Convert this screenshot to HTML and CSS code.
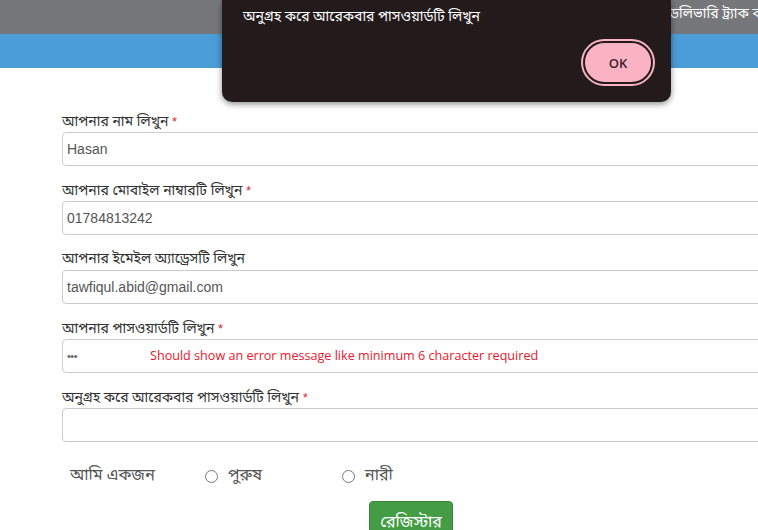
FILE: index.html
```html
<!DOCTYPE html>
<html lang="bn">
<head>
<meta charset="utf-8">
<title>Register</title>
<link rel="stylesheet" href="styles.css">
</head>
<body>
<header class="topbar">
  <span class="track">ডেলিভারি ট্র্যাক করুন</span>
</header>
<div class="navbar"></div>

<main class="form">
  <div class="group">
    <label class="label">আপনার নাম লিখুন <span class="req">*</span></label>
    <div class="input">Hasan</div>
  </div>
  <div class="group">
    <label class="label">আপনার মোবাইল নাম্বারটি লিখুন <span class="req">*</span></label>
    <div class="input">01784813242</div>
  </div>
  <div class="group">
    <label class="label">আপনার ইমেইল অ্যাড্রেসটি লিখুন</label>
    <div class="input">tawfiqul.abid@gmail.com</div>
  </div>
  <div class="group">
    <label class="label">আপনার পাসওয়ার্ডটি লিখুন <span class="req">*</span></label>
    <div class="input input-pass"><span class="dots">•••</span><span class="error">Should show an error message like minimum 6 character required</span></div>
  </div>
  <div class="group">
    <label class="label">অনুগ্রহ করে আরেকবার পাসওয়ার্ডটি লিখুন <span class="req">*</span></label>
    <div class="input"></div>
  </div>
  <div class="gender">
    <span class="gender-label">আমি একজন</span>
    <span class="radio-opt"><span class="radio"></span>পুরুষ</span>
    <span class="radio-opt"><span class="radio"></span>নারী</span>
  </div>
  <div class="actions">
    <button class="btn">রেজিস্টার</button>
  </div>
</main>

<div class="dialog">
  <p class="dialog-msg">অনুগ্রহ করে আরেকবার পাসওয়ার্ডটি লিখুন</p>
  <div class="dialog-actions">
    <button class="ok">OK</button>
  </div>
</div>
</body>
</html>
```

FILE: styles.css
```css
html, body {
  margin: 0;
  padding: 0;
  overflow: hidden;
  background: #ffffff;
}
body {
  font-family: "Noto Sans Bengali", "Noto Serif Bengali", "Lohit Bengali", "FreeSerif", "Liberation Sans", sans-serif;
  color: #333333;
  width: 758px;
  height: 530px;
  position: relative;
}
.topbar {
  height: 34px;
  background: #76777b;
  display: flex;
  align-items: center;
  padding-left: 664px;
  white-space: nowrap;
  overflow: hidden;
}
.track {
  color: #ffffff;
  font-size: 14px;
  line-height: 1;
  margin-top: -4px;
}
.navbar {
  height: 34px;
  background: #4a9dd6;
}
.form {
  padding: 41px 0 0 62px;
  width: 720px;
}
.group {
  margin-bottom: 12px;
}
.label {
  display: block;
  height: 23px;
  line-height: 25px;
  font-size: 14px;
  color: #333333;
  white-space: nowrap;
}
.req {
  color: #e01f2d;
  font-family: "Liberation Sans", sans-serif;
  font-size: 13px;
}
.input {
  box-sizing: border-box;
  height: 34px;
  border: 1px solid #cccccc;
  border-radius: 4px;
  padding: 0 4px;
  display: flex;
  align-items: center;
  font-family: "Liberation Sans", Arial, sans-serif;
  font-size: 14px;
  color: #555555;
  position: relative;
}
.dots {
  font-size: 11px;
  letter-spacing: -0.5px;
  color: #666;
}
.error {
  position: absolute;
  left: 87px;
  top: 7px;
  font-family: "Open Sans", "Noto Sans", sans-serif;
  font-size: 12.6px;
  color: #e8172c;
  white-space: nowrap;
}
.gender {
  display: flex;
  align-items: center;
  height: 32px;
  margin-top: 18px;
  padding-left: 8px;
  font-size: 16px;
  color: #555555;
}
.gender-label {
  width: 135px;
}
.radio-opt {
  display: inline-flex;
  align-items: center;
  width: 137px;
}
.radio {
  box-sizing: border-box;
  width: 13px;
  height: 13px;
  border: 1px solid #777777;
  border-radius: 50%;
  margin-right: 10px;
}
.actions {
  display: flex;
  padding-left: 307px;
  margin-top: 9px;
}
.btn {
  width: 84px;
  height: 40px;
  border: 1px solid #398439;
  border-radius: 4px;
  background: #449d44;
  color: #ffffff;
  font-family: inherit;
  font-size: 16px;
  padding: 10px 0 0;
  display: flex;
  justify-content: center;
  align-items: flex-start;
}

/* alert dialog overlay */
.dialog {
  position: absolute;
  left: 222px;
  top: 0;
  width: 449px;
  height: 102px;
  box-sizing: border-box;
  background: #231a1c;
  border-radius: 0 0 10px 10px;
  box-shadow: 0 2px 6px rgba(0, 0, 0, 0.45);
  padding: 8px 18px 0 21px;
  display: flex;
  flex-direction: column;
}
.dialog-msg {
  margin: 0;
  color: #ffffff;
  font-size: 14px;
  line-height: 20px;
}
.dialog-actions {
  display: flex;
  justify-content: flex-end;
  margin-top: 13px;
}
.ok {
  box-sizing: border-box;
  width: 70px;
  height: 43px;
  border-radius: 22px;
  background: #f9b3c2;
  border: 2px solid #231a1c;
  box-shadow: 0 0 0 2px #f9b3c2;
  color: #3b2036;
  font-family: "Open Sans", "Noto Sans", sans-serif;
  font-size: 13px;
  font-weight: 600;
  margin-right: 0;
}
```
